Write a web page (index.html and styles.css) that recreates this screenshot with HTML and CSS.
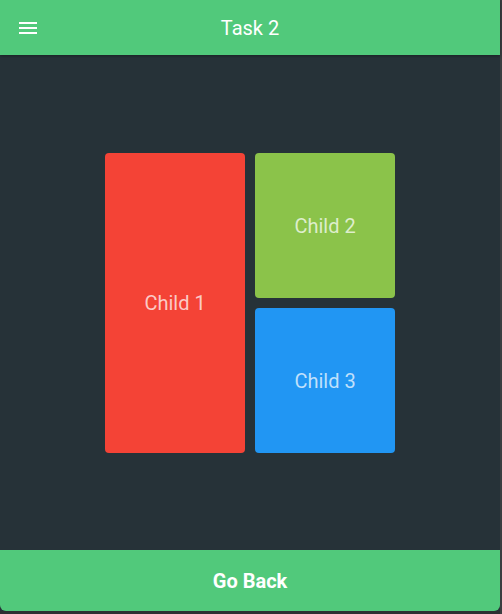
FILE: index.html
```html
<!DOCTYPE html>
<html>
<head>
<meta charset="utf-8">
<link rel="stylesheet" href="styles.css">
</head>
<body>
<div class="app">
  <header class="bar">
    <svg class="menu" viewBox="0 0 24 24" width="24" height="24"><path fill="#fff" d="M3 18h18v-2H3v2zm0-5h18v-2H3v2zm0-7v2h18V6H3z"/></svg>
    <div class="title">Task 2</div>
  </header>
  <main class="content">
    <div class="grid">
      <div class="child c1">Child 1</div>
      <div class="child c2">Child 2</div>
      <div class="child c3">Child 3</div>
    </div>
  </main>
  <button class="back">Go Back</button>
  <div class="footer"></div>
</div>
</body>
</html>
```

FILE: styles.css
```css
html, body {
  margin: 0;
  padding: 0;
  background: #3a3d40;
  height: 100%;
  overflow: hidden;
}
.app {
  width: 500px;
  height: 614px;
  display: flex;
  flex-direction: column;
  background: #263238;
  font-family: Roboto, "Noto Sans", sans-serif;
}
.bar {
  height: 55px;
  flex: none;
  background: #51c97b;
  position: relative;
  display: flex;
  align-items: center;
  justify-content: center;
  box-shadow: 0 1px 3px rgba(0,0,0,0.35);
  z-index: 1;
}
.menu {
  position: absolute;
  left: 16px;
  top: 16px;
}
.title {
  color: #fff;
  font-size: 20px;
  line-height: 24px;
}
.content {
  flex: 1;
  display: flex;
  align-items: center;
  justify-content: center;
}
.grid {
  display: grid;
  grid-template-columns: 140px 140px;
  grid-template-rows: 145px 145px;
  gap: 10px;
  margin-top: 1px;
}
.child {
  border-radius: 4px;
  display: flex;
  align-items: center;
  justify-content: center;
  color: rgba(255,255,255,0.72);
  font-size: 20px;
}
.c1 { background: #f44336; grid-row: 1 / 3; }
.c2 { background: #8bc34a; }
.c3 { background: #2196f3; }
.back {
  flex: none;
  height: 61px;
  border: none;
  margin: 0;
  padding: 0;
  background: #51c97b;
  color: #fff;
  font-family: Roboto, "Noto Sans", sans-serif;
  font-weight: bold;
  font-size: 20px;
  border-radius: 0 0 6px 6px;
}
.footer {
  height: 3px;
  flex: none;
  background: #2d2f31;
}
```
